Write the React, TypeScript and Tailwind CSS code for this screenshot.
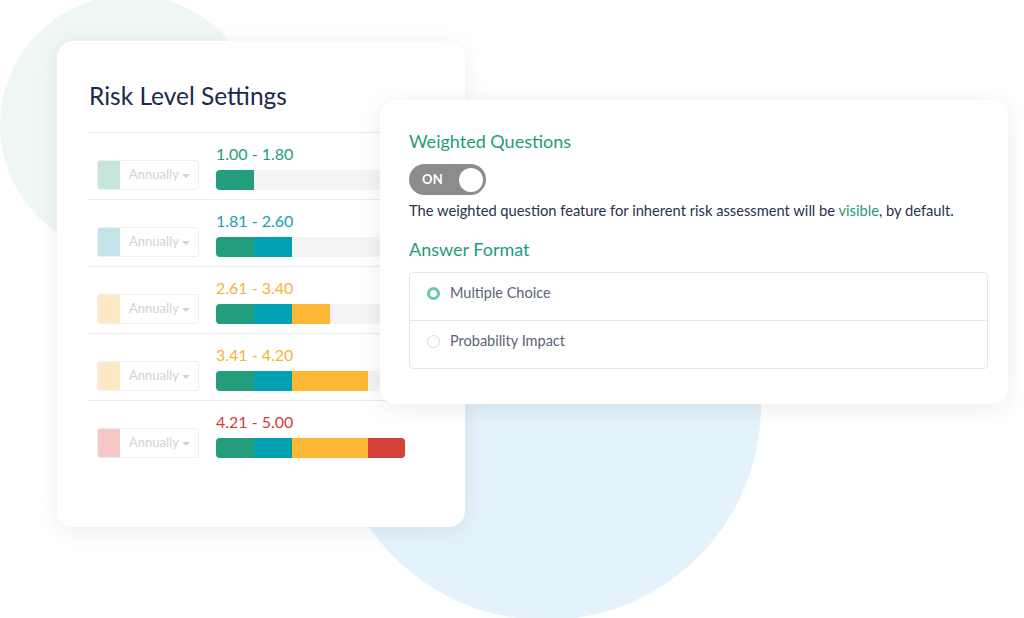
import React from "react";

type Row = {
  range: string;
  labelColor: string;
  swatch: string;
  segments: number;
};

const rows: Row[] = [
  { range: "1.00 - 1.80", labelColor: "text-[#1f9c7a]", swatch: "bg-[#c6e6dc]", segments: 1 },
  { range: "1.81 - 2.60", labelColor: "text-[#14a0b0]", swatch: "bg-[#c4e4e9]", segments: 2 },
  { range: "2.61 - 3.40", labelColor: "text-[#f9b233]", swatch: "bg-[#fde9c6]", segments: 3 },
  { range: "3.41 - 4.20", labelColor: "text-[#f9b233]", swatch: "bg-[#fde9c6]", segments: 4 },
  { range: "4.21 - 5.00", labelColor: "text-[#d2403c]", swatch: "bg-[#f4c7c7]", segments: 5 },
];

const segClasses = [
  "w-[38px] bg-[#229e7c]",
  "w-[38px] bg-[#00a1b1]",
  "w-[38px] bg-[#fdb735]",
  "w-[38px] bg-[#fdb735]",
  "w-[37px] bg-[#d5403c]",
];

function RiskRow({ row }: { row: Row }) {
  return (
    <div className="flex items-end border-t border-[#ececec] h-[67px] pl-[9px] pb-[9px]">
      <div className="flex h-[30px] w-[102px] rounded-[3px] border border-[#efefef] overflow-hidden">
        <div className={`w-[22px] h-full ${row.swatch}`} />
        <div className="flex items-center pl-[9px] text-[13px] text-[#d3d3d3]">
          <span>Annually</span>
          <svg width="10" height="6" viewBox="0 0 10 6" className="ml-[2px] mt-[1px]">
            <path d="M1 1 L9 1 L5 5 Z" fill="#d3d3d3" />
          </svg>
        </div>
      </div>
      <div className="ml-[17px] flex flex-col">
        <div className={`text-[16px] leading-[20px] ${row.labelColor}`}>{row.range}</div>
        <div className="mt-[6px] flex h-[20px] w-[189px] rounded-[4px] overflow-hidden bg-[#f4f4f4]">
          {segClasses.slice(0, row.segments).map((c, i) => (
            <div key={i} className={`h-full ${c}`} />
          ))}
        </div>
      </div>
    </div>
  );
}

export default function App() {
  return (
    <div className="relative w-[1024px] h-[618px] overflow-hidden bg-white font-['Lato',sans-serif]">
      {/* background circles */}
      <div className="absolute left-[0px] top-[-5px] w-[260px] h-[260px] rounded-full bg-[#eff7f5]" />
      <div className="absolute left-[331px] top-[190px] w-[430px] h-[430px] rounded-full bg-[#e4f2fb]" />

      {/* left card */}
      <div className="relative ml-[57px] mt-[41px] w-[408px] h-[486px] rounded-[16px] bg-white shadow-[0_4px_24px_rgba(0,0,0,0.07)] px-[31px] pt-[40px]">
        <h1 className="text-[24.5px] leading-[30px] text-[#1b2a4a] pl-[1px]">Risk Level Settings</h1>
        <div className="mt-[21px]">
          {rows.map((r) => (
            <RiskRow key={r.range} row={r} />
          ))}
        </div>
      </div>

      {/* right card */}
      <div className="absolute left-[380px] top-[100px] w-[628px] h-[304px] rounded-[16px] bg-white shadow-[0_4px_24px_rgba(0,0,0,0.08)] pl-[29px] pr-[20px] pt-[30px]">
        <h2 className="text-[18px] leading-[22px] text-[#1f9c7a]">Weighted Questions</h2>
        <div className="mt-[12px] flex items-center justify-between w-[77px] h-[31px] rounded-full bg-[#8c8c8c] pl-[13px] pr-[3px]">
          <span className="text-[13px] font-bold text-white tracking-[0.3px]">ON</span>
          <span className="w-[24px] h-[24px] rounded-full bg-white" />
        </div>
        <p className="mt-[5px] text-[14.7px] leading-[20px] text-[#26324f]">
          The weighted question feature for inherent risk assessment will be{" "}
          <span className="text-[#1f9c7a]">visible</span>, by default.
        </p>
        <h2 className="mt-[18px] text-[18px] leading-[22px] text-[#1f9c7a]">Answer Format</h2>
        <div className="mt-[12px] rounded-[4px] border border-[#e6e6e6]">
          <div className="flex items-center h-[47px] pb-[7px] pl-[17px]">
            <span className="w-[13px] h-[13px] rounded-full border-[3.5px] border-[#6ec6a6] bg-white" />
            <span className="ml-[10px] text-[14.5px] leading-[20px] text-[#5b6478]">Multiple Choice</span>
          </div>
          <div className="flex items-center h-[48px] pb-[7px] pl-[17px] border-t border-[#e6e6e6]">
            <span className="w-[13px] h-[13px] rounded-full border border-[#d8d8d8] bg-white" />
            <span className="ml-[10px] text-[14.5px] leading-[20px] text-[#5b6478]">Probability Impact</span>
          </div>
        </div>
      </div>
    </div>
  );
}
